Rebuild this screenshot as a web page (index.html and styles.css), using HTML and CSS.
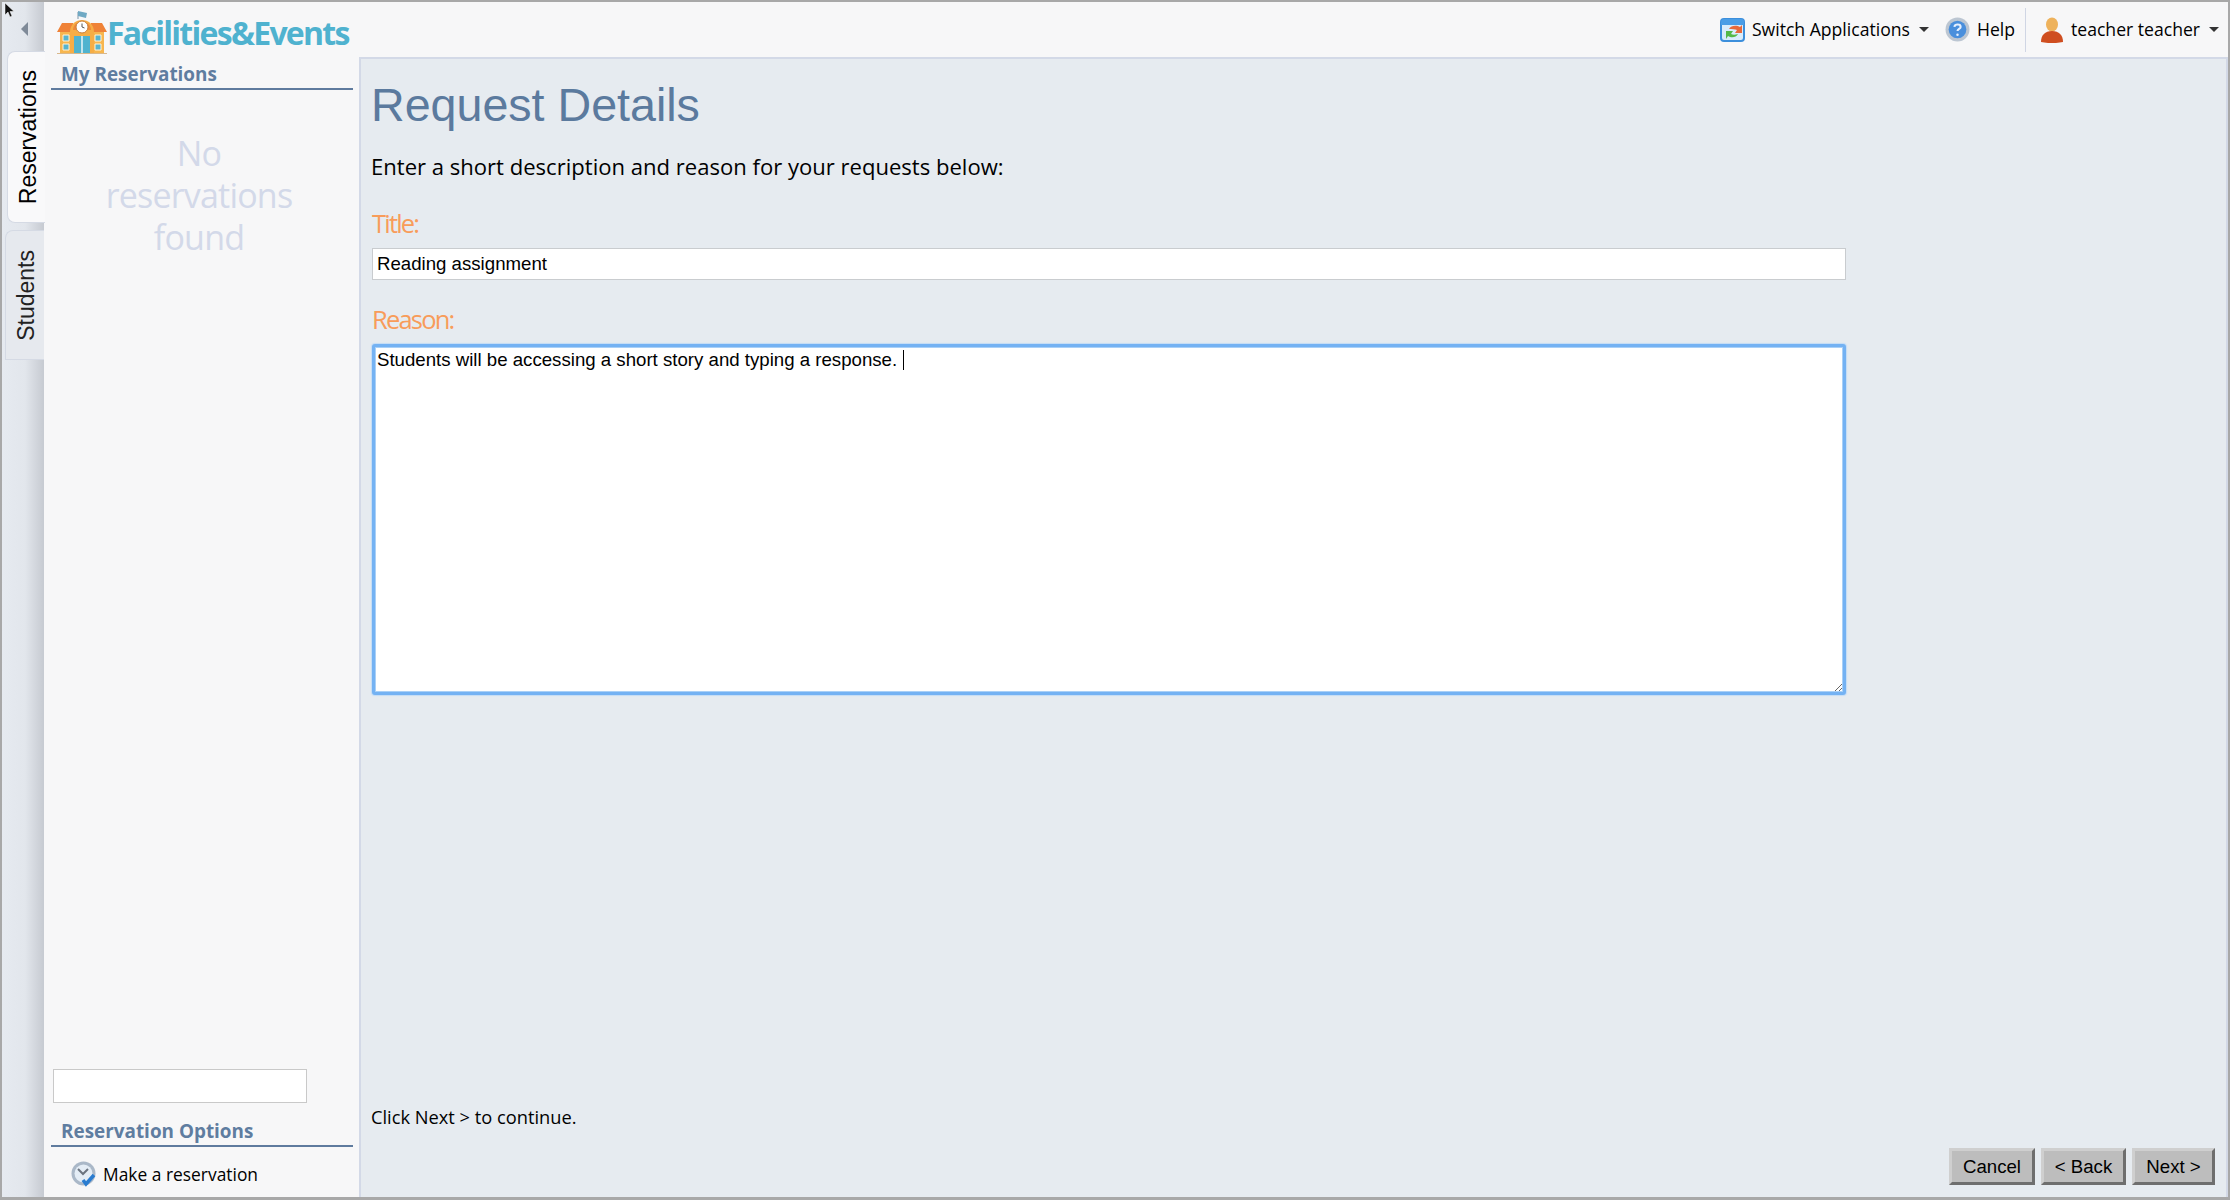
FILE: index.html
```html
<!DOCTYPE html>
<html lang="en">
<head>
<meta charset="utf-8">
<title>Facilities&amp;Events</title>
<link rel="stylesheet" href="styles.css">
</head>
<body>
<div class="app">
  <svg class="pointer" width="10" height="15" viewBox="0 0 10 15"><path d="M1 0v12l3-3 2 5 2-1-2-4.500h4z" fill="#111" stroke="#fff" stroke-width=".5"/></svg>
  <nav class="rail">
    <div class="collapse"><span class="collapse-arrow"></span></div>
    <div class="tab tab-active"><span>Reservations</span></div>
    <div class="tab tab-idle"><span>Students</span></div>
  </nav>
  <div class="content">
    <header class="topbar">
      <div class="logo">
        <svg class="logo-icon" width="50" height="44" viewBox="0 0 50 44">
          <path d="M21 2v7" stroke="#7a95a8" stroke-width="1"/>
          <path d="M21 1l9 2-1 5-8-2z" fill="#6fa9c4"/>
          <path d="M5 31h40v12H5z" fill="#f5b24a"/>
          <path d="M3 20h44v23H3z" fill="#f7b64f"/>
          <path d="M0 22l5-9h11v9zM50 22l-5-9H34v9z" fill="#ef8237"/>
          <path d="M13 22c0-16 24-16 24 0v21H13z" fill="#f6ad45"/>
          <path d="M16 20c0-11 18-11 18 0z" fill="#ef8a3a"/>
          <circle cx="25" cy="17" r="6" fill="#fff" stroke="#c9803a"/>
          <path d="M25 13.500V17l2.500 1" stroke="#555" fill="none"/>
          <path d="M17 26h16v17H17z" fill="#4fb3cf"/>
          <path d="M25 26v17" stroke="#e9f6fa" stroke-width="1.500"/>
          <path d="M6 25h6v6H6zM38 25h6v6h-6zM6 34h6v6H6zM38 34h6v6h-6z" fill="#58b4ce" stroke="#fff3d9"/>
          <path d="M0 43h50v1H0z" fill="#d9b88c"/>
        </svg>
        <span class="logo-text">Facilities&amp;Events</span>
      </div>
      <div class="topnav">
        <div class="topnav-item switch">
          <svg width="26" height="26" viewBox="0 0 26 26">
            <rect x="1" y="2" width="23" height="22" rx="3" fill="#d9ecfb" stroke="#3c8fdc" stroke-width="2"/>
            <path d="M1 8V5a3 3 0 0 1 3-3h17a3 3 0 0 1 3 3v3z" fill="#4a9de6"/>
            <path d="M9 12c2-4 8-4 11-2l2-2v8h-7l2-3c-2-1-5-1-8-1z" fill="#e8693a"/>
            <path d="M18 17c-2 4-7 4-10 2l-2 3v-8h7l-2 3c2 1 4 1 7 0z" fill="#55b848"/>
          </svg>
          <span class="nav-label">Switch Applications</span><span class="caret-down"></span>
        </div>
        <div class="topnav-item help">
          <svg width="25" height="25" viewBox="0 0 24 24">
            <circle cx="12" cy="12" r="11.500" fill="#bcc6d2"/>
            <circle cx="12" cy="12" r="8.500" fill="#4a8fdc"/>
            <path d="M9 9.500c.5-3 6-3 6 0 0 2-3 2-3 4" fill="none" stroke="#e6f0ff" stroke-width="2"/>
            <circle cx="12" cy="17" r="1.200" fill="#e6f0ff"/>
          </svg>
          <span class="nav-label">Help</span>
        </div>
        <div class="topnav-item user">
          <svg width="24" height="26" viewBox="0 0 24 26">
            <ellipse cx="12" cy="7.500" rx="6" ry="7" fill="#eeb25c"/>
            <path d="M1 25c0-7 4-11 11-11s11 4 11 11c-6 1.500-16 1.500-22 0z" fill="#cf4e20"/>
          </svg>
          <span class="nav-label">teacher teacher</span><span class="caret-down"></span>
        </div>
      </div>
    </header>
    <div class="body">
      <aside class="sidebar">
        <h2 class="side-heading">My Reservations</h2>
        <p class="empty">No reservations found</p>
        <input class="side-search" type="text" aria-label="Search">
        <h2 class="side-heading options-heading">Reservation Options</h2>
        <div class="side-link">
          <svg width="26" height="26" viewBox="0 0 26 26">
            <circle cx="12.500" cy="12.500" r="12" fill="#aab8c8"/>
            <circle cx="12.500" cy="12.500" r="9" fill="#e4edf6"/>
            <path d="M7 8l5 5 5-5" fill="none" stroke="#6b7480" stroke-width="2"/>
            <path d="M12 19l3 4 8-9" fill="none" stroke="#2a7cd0" stroke-width="3.500"/>
          </svg>
          <span>Make a reservation</span>
        </div>
      </aside>
      <main class="main">
        <h1 class="page-title">Request Details</h1>
        <p class="intro">Enter a short description and reason for your requests below:</p>
        <label class="field-label title-label" for="title">Title:</label>
        <input class="title-input" id="title" type="text" value="Reading assignment">
        <label class="field-label reason-label" for="reason">Reason:</label>
        <div class="reason-wrap">
          <textarea class="reason-input" id="reason">Students will be accessing a short story and typing a response. </textarea>
          <span class="text-caret"></span>
        </div>
        <p class="hint">Click Next &gt; to continue.</p>
        <div class="actions">
          <button class="btn btn-cancel" type="button">Cancel</button>
          <button class="btn btn-back" type="button">&lt; Back</button>
          <button class="btn btn-next" type="button">Next &gt;</button>
        </div>
      </main>
    </div>
  </div>
</div>
</body>
</html>
```
FILE: styles.css
```css
* { box-sizing: border-box; }
html, body { margin: 0; height: 100%; }
body { font-family: "Open Sans", "Noto Sans", sans-serif; color: #000; overflow: hidden; }

.app {
  position: relative;
  display: flex;
  width: 2230px;
  height: 1200px;
  border: 2px solid #a8a8a8;
  border-bottom-width: 3px;
  background: #f7f7f8;
}
.pointer { position: absolute; left: 2px; top: 1px; z-index: 5; }

.rail {
  width: 42px;
  flex: none;
  background: linear-gradient(90deg, #e6eaf0 0%, #e2e6ec 55%, #c6cad1 100%);
  display: flex;
  flex-direction: column;
}
.collapse { height: 49px; padding: 20px 0 0 19px; }
.collapse-arrow {
  display: block;
  width: 0;
  height: 0;
  border-style: solid;
  border-width: 7px 7px 7px 0;
  border-color: transparent #7f8a98 transparent transparent;
}
.tab {
  display: flex;
  align-items: center;
  justify-content: center;
  font-family: "Liberation Sans", sans-serif;
  font-size: 23px;
  border: 1px solid #d5dae4;
  border-right: 0;
}
.tab span { writing-mode: vertical-rl; transform: rotate(180deg); }
.tab-active { width: 38px; height: 172px; margin-left: 5px; padding-left: 4px; background: #f9f9fa; border-radius: 8px 0 0 8px; }
.tab-idle { height: 130px; margin: 7px 0 0 3px; padding-left: 2px; background: #e6e9ee; color: #222; border-radius: 8px 0 0 0; }

.content { flex: 1; display: flex; flex-direction: column; min-width: 0; }
.topbar {
  height: 55px;
  flex: none;
  display: flex;
  align-items: center;
  justify-content: space-between;
  padding-right: 9px;
}
.logo { display: flex; align-items: flex-end; margin-left: 13px; height: 50px; }
.logo-icon { margin-bottom: 1px; }
.logo-text {
  font-weight: 700;
  font-size: 32px;
  letter-spacing: -1.720px;
  line-height: 44px;
  color: #4fb2cf;
}
.topnav { display: flex; align-items: center; font-size: 17.600px; height: 44px; }
.topnav-item { display: flex; align-items: center; }
.nav-label { margin-bottom: 2px; }
.switch svg { margin-right: 6px; }
.caret-down {
  width: 0;
  height: 0;
  margin-left: 9px;
  border-style: solid;
  border-width: 5px 5px 0;
  border-color: #333 transparent transparent;
}
.help { margin-left: 16px; }
.help svg { margin-right: 7px; }
.user { margin-left: 10px; padding-left: 14px; height: 44px; border-left: 1px solid #d0d6e4; }
.user svg { margin-right: 7px; }

.body { flex: 1; display: flex; min-height: 0; }
.sidebar {
  width: 315px;
  flex: none;
  display: flex;
  flex-direction: column;
  padding: 5px 6px 0 7px;
}
.side-heading {
  margin: 0;
  height: 28px;
  padding-left: 10px;
  font-size: 18.900px;
  line-height: 24px;
  font-weight: 700;
  color: #5f7da0;
  border-bottom: 2px solid #5f7b9e;
}
.empty {
  width: 200px;
  margin: 42px 0 0 48px;
  flex: 1;
  font-size: 34px;
  line-height: 42px;
  text-align: center;
  letter-spacing: -.8px;
  color: #d3d9e9;
}
.side-search {
  width: 254px;
  height: 34px;
  margin-left: 2px;
  background: #fff;
  border: 1px solid #c9c9c9;
}
.options-heading { margin-top: 15px; height: 29px; line-height: 26px; }
.side-link {
  display: flex;
  align-items: center;
  height: 50px;
  padding: 4px 0 0 20px;
  font-size: 17.400px;
}
.side-link svg { margin-right: 6px; }

.main {
  flex: 1;
  display: flex;
  flex-direction: column;
  padding: 0 11px 12px 11px;
  background: #e6ebf0;
  border: 2px solid #d3d9e7;
  border-width: 2px 2px 0;
}
.page-title {
  margin: 18px 0 0 -1px;
  font-family: "Liberation Sans", sans-serif;
  font-weight: 400;
  font-size: 46.600px;
  line-height: 56px;
  color: #5b7a9e;
}
.intro { margin: 17px 0 0 -1px; font-size: 22.070px; line-height: 32px; }
.field-label { display: block; font-size: 25.500px; line-height: 32px; letter-spacing: -1.800px; color: #f89c5a; }
.title-label { margin-top: 25px; }
.reason-label { margin-top: 23px; }
.title-input {
  display: block;
  width: 1474px;
  height: 32px;
  margin-top: 9px;
  padding: 0 4px;
  background: #fff;
  border: 1px solid #c9cccf;
  font-family: "Liberation Sans", sans-serif;
  font-size: 18.650px;
  color: #000;
  outline: 0;
}
.reason-wrap { position: relative; width: 1474px; height: 351px; margin-top: 9px; }
.reason-input {
  display: block;
  width: 100%;
  height: 100%;
  padding: 2px 2px;
  background: #fff;
  border: 3px solid #74b2f3;
  border-radius: 3px;
  box-shadow: 0 0 1px 1px #c3dcf6, inset 0 0 0 1px #a9d0f7;
  font-family: "Liberation Sans", sans-serif;
  font-size: 18.650px;
  line-height: 21px;
  color: #000;
  outline: 0;
  resize: both;
}
.text-caret {
  position: absolute;
  left: 531px;
  top: 6px;
  width: 1px;
  height: 20px;
  background: #000;
}
.hint { margin: auto 0 0 -1px; font-size: 18.250px; line-height: 26px; }
.actions { display: flex; justify-content: flex-end; gap: 6px; margin-top: 18px; }
.btn {
  height: 37px;
  padding: 0;
  font-family: "Liberation Sans", sans-serif;
  font-size: 18.650px;
  color: #000;
  background: #bdbdbd;
  border: 3px solid;
  border-color: #cfcfcf #6e6e6e #6e6e6e #cfcfcf;
}
.btn-cancel { width: 86px; }
.btn-back { width: 85px; }
.btn-next { width: 83px; }
```
